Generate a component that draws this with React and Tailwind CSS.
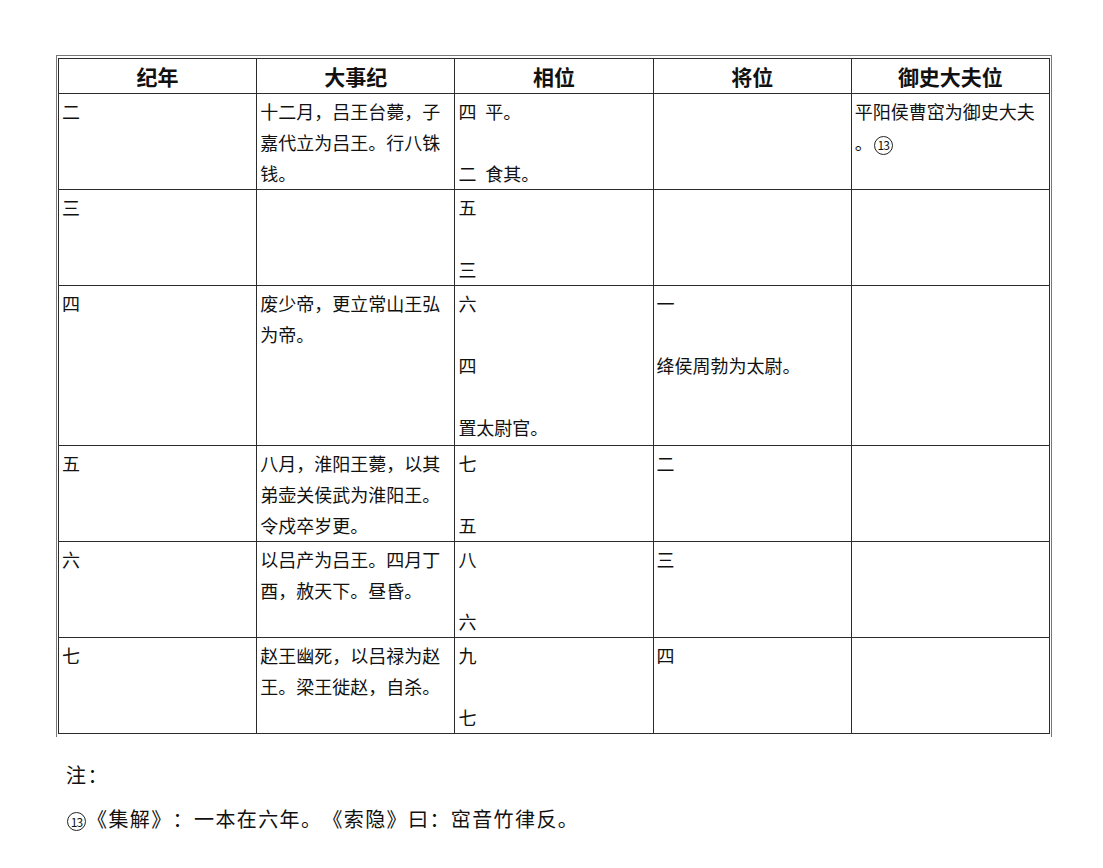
import React from "react";

const rows = [
	{
		h: "h-[96px]",
		year: "二",
		events: ["十二月，吕王台薨，子", "嘉代立为吕王。行八铢", "钱。"],
		xiang: ["四\u2002平。", "", "二\u2002食其。"],
		jiang: [],
		yushi: ["平阳侯曹窋为御史大夫", "note"],
	},
	{
		h: "h-[96px]",
		year: "三",
		events: [],
		xiang: ["五", "", "三"],
		jiang: [],
		yushi: [],
	},
	{
		h: "h-[160px]",
		year: "四",
		events: ["废少帝，更立常山王弘", "为帝。"],
		xiang: ["六", "", "四", "", "置太尉官。"],
		jiang: ["一", "", "绛侯周勃为太尉。"],
		yushi: [],
	},
	{
		h: "h-[96px]",
		year: "五",
		events: ["八月，淮阳王薨，以其", "弟壶关侯武为淮阳王。", "令戍卒岁更。"],
		xiang: ["七", "", "五"],
		jiang: ["二"],
		yushi: [],
	},
	{
		h: "h-[95px]",
		year: "六",
		events: ["以吕产为吕王。四月丁", "酉，赦天下。昼昏。"],
		xiang: ["八", "", "六"],
		jiang: ["三"],
		yushi: [],
	},
	{
		h: "h-[94px]",
		year: "七",
		events: ["赵王幽死，以吕禄为赵", "王。梁王徙赵，自杀。"],
		xiang: ["九", "", "七"],
		jiang: ["四"],
		yushi: [],
	},
];

const headers = ["纪年", "大事纪", "相位", "将位", "御史大夫位"];

// circled footnote number, drawn as a ring round real text
const Mark = () => (
	<span className="mx-[1px] inline-flex h-[19px] w-[19px] items-center justify-center rounded-full border border-[#222] align-middle text-[12px] leading-none tracking-[-1px]">
		13
	</span>
);

const Lines = ({ items }) => (
	<>
		{items.map((t, i) => (
			<div key={i} className="h-[31px] whitespace-nowrap">
				{t === "" ? "\u00a0" : t === "note" ? (
					<>
						。<Mark />
					</>
				) : (
					t
				)}
			</div>
		))}
	</>
);

const cell = "border border-[#2b2b2b] align-top pl-[3px] pt-[2px] text-[18px] leading-[31px] text-[#111]";

export default function App() {
	return (
		<div lang="zh-CN" className="min-h-[868px] bg-white font-['Noto_Sans_CJK_SC','DejaVu_Sans',sans-serif] text-[#111] [text-spacing-trim:space-all]">
			<div className="pt-[55px] pl-[56px]">
				<div className="w-[996px] border-l border-t border-r border-[#777] pl-px pr-px pt-[2px] pb-[3px]">
					<table className="w-full table-fixed border-collapse">
						<thead>
							<tr className="h-[35px]">
								{headers.map((h) => (
									<th key={h} className="w-1/5 border border-[#2b2b2b] text-center text-[21px] font-bold leading-[33px] text-[#111]">
										{h}
									</th>
								))}
							</tr>
						</thead>
						<tbody>
							{rows.map((r) => (
								<tr key={r.year} className={r.h}>
									<td className={cell}>
										<Lines items={[r.year]} />
									</td>
									<td className={cell}>
										<Lines items={r.events} />
									</td>
									<td className={cell}>
										<Lines items={r.xiang} />
									</td>
									<td className={cell}>
										<Lines items={r.jiang} />
									</td>
									<td className={cell}>
										<Lines items={r.yushi} />
									</td>
								</tr>
							))}
						</tbody>
					</table>
				</div>
			</div>

			<div className="pl-[66px] pt-[16px] text-[20px] leading-[44px] tracking-[1.4px] text-[#111]">
				<div>注：</div>
				<div>
					<Mark />《集解》：一本在六年。《索隐》曰：窋音竹律反。
				</div>
			</div>
		</div>
	);
}
